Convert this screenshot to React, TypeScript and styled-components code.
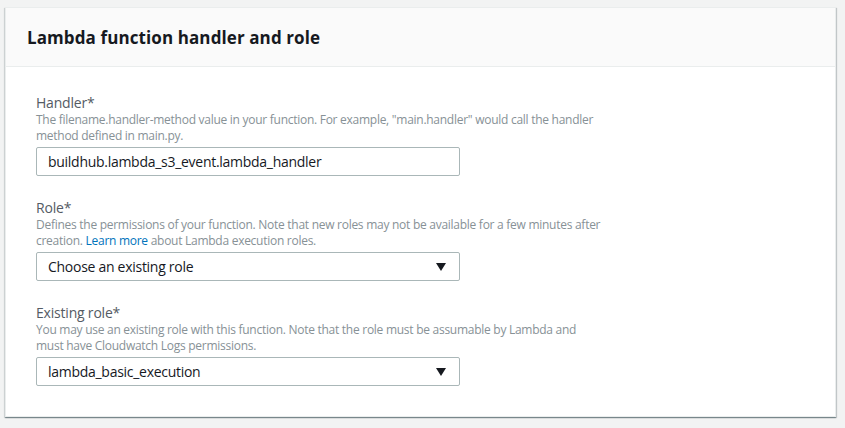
import React from 'react';
import styled, { createGlobalStyle } from 'styled-components';

const GlobalStyle = createGlobalStyle`
  html, body {
    margin: 0;
    padding: 0;
    background: #f2f3f3;
  }
  body {
    font-family: "Open Sans", "Noto Sans", sans-serif;
  }
`;

const Page = styled.div`
  width: 845px;
  height: 428px;
  padding: 7px 9px 0 5px;
  box-sizing: border-box;
`;

const Card = styled.section`
  background: #fff;
  border: 1px solid #eaeded;
  box-shadow: 0 1px 1px 0 rgba(0, 28, 36, 0.35), 1px 1px 1px 0 rgba(0, 28, 36, 0.15),
    -1px 1px 1px 0 rgba(0, 28, 36, 0.1);
  height: 410px;
  box-sizing: border-box;
`;

const Header = styled.div`
  background: #fafafa;
  border-bottom: 1px solid #eaeded;
  height: 59px;
  box-sizing: border-box;
  padding: 0 21px;
  display: flex;
  align-items: center;
`;

const Title = styled.h2`
  margin: 0;
  font-size: 17px;
  letter-spacing: 0.1px;
  font-weight: 700;
  color: #16191f;
`;

const Body = styled.div`
  padding: 27px 30px 0;
  display: flex;
  flex-direction: column;
  gap: 23px;
`;

const Field = styled.div`
  display: flex;
  flex-direction: column;
  width: 567px;
`;

const Label = styled.label`
  font-size: 14px;
  line-height: 18px;
  letter-spacing: -0.2px;
  color: #545b64;
`;

const Hint = styled.div`
  font-size: 12px;
  line-height: 15.5px;
  letter-spacing: -0.27px;
  color: #879196;
  margin-bottom: 4px;
`;

const Link = styled.a`
  color: #0073bb;
  text-decoration: none;
`;

const Box = styled.div`
  width: 424px;
  height: 29px;
  box-sizing: border-box;
  border: 1px solid #aab7b8;
  border-radius: 2px;
  padding: 0 13px 0 11px;
  display: flex;
  align-items: center;
  justify-content: space-between;
  font-size: 14px;
  letter-spacing: -0.28px;
  color: #16191f;
  background: #fff;
`;

const Caret = () => (
  <svg width="10" height="8" viewBox="0 0 10 8">
    <path d="M0 0 H10 L5 8 Z" fill="#16191f" />
  </svg>
);

export default function App() {
  return (
    <>
      <GlobalStyle />
      <Page>
        <Card>
          <Header>
            <Title>Lambda function handler and role</Title>
          </Header>
          <Body>
            <Field>
              <Label>Handler*</Label>
              <Hint>
                The filename.handler-method value in your function. For example, "main.handler" would call the handler
                method defined in main.py.
              </Hint>
              <Box>buildhub.lambda_s3_event.lambda_handler</Box>
            </Field>
            <Field>
              <Label>Role*</Label>
              <Hint>
                Defines the permissions of your function. Note that new roles may not be available for a few minutes after
                creation. <Link href="#">Learn more</Link> about Lambda execution roles.
              </Hint>
              <Box>
                Choose an existing role
                <Caret />
              </Box>
            </Field>
            <Field>
              <Label>Existing role*</Label>
              <Hint>
                You may use an existing role with this function. Note that the role must be assumable by Lambda and
                must have Cloudwatch Logs permissions.
              </Hint>
              <Box>
                lambda_basic_execution
                <Caret />
              </Box>
            </Field>
          </Body>
        </Card>
      </Page>
    </>
  );
}
